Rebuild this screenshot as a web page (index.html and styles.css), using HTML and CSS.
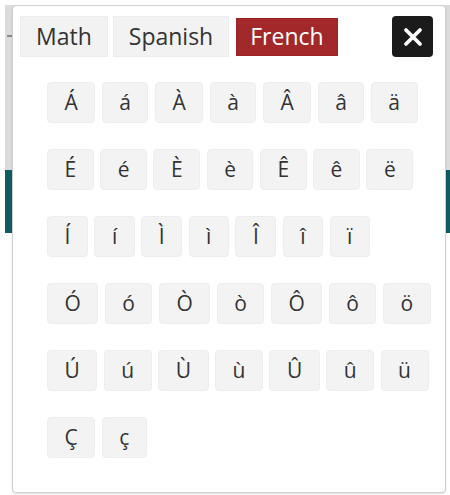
FILE: index.html
```html
<!DOCTYPE html>
<html>
<head>
<meta charset="utf-8">
<link rel="stylesheet" href="styles.css">
</head>
<body>
<div class="page">
  <div class="band-gray"><span class="tick"></span></div>
  <div class="band-teal"></div>
</div>
<div class="popup">
  <div class="header">
    <div class="tabs">
      <button class="tab">Math</button>
      <button class="tab">Spanish</button>
      <button class="tab active">French</button>
    </div>
    <button class="close" aria-label="Close">
      <svg width="20" height="20" viewBox="0 0 20 20"><path d="M3 3 L17 17 M17 3 L3 17" stroke="#fff" stroke-width="3.8" stroke-linecap="round"/></svg>
    </button>
  </div>
  <div class="chars">
    <div class="row"><button class="ch">Á</button><button class="ch">á</button><button class="ch">À</button><button class="ch">à</button><button class="ch">Â</button><button class="ch">â</button><button class="ch">ä</button></div>
    <div class="row"><button class="ch">É</button><button class="ch">é</button><button class="ch">È</button><button class="ch">è</button><button class="ch">Ê</button><button class="ch">ê</button><button class="ch">ë</button></div>
    <div class="row"><button class="ch">Í</button><button class="ch">í</button><button class="ch">Ì</button><button class="ch">ì</button><button class="ch">Î</button><button class="ch">î</button><button class="ch">ï</button></div>
    <div class="row"><button class="ch">Ó</button><button class="ch">ó</button><button class="ch">Ò</button><button class="ch">ò</button><button class="ch">Ô</button><button class="ch">ô</button><button class="ch">ö</button></div>
    <div class="row"><button class="ch">Ú</button><button class="ch">ú</button><button class="ch">Ù</button><button class="ch">ù</button><button class="ch">Û</button><button class="ch">û</button><button class="ch">ü</button></div>
    <div class="row"><button class="ch">Ç</button><button class="ch">ç</button></div>
  </div>
</div>
</body>
</html>
```
FILE: styles.css
```css
html, body {
  margin: 0;
  padding: 0;
  background: #fff;
  width: 450px;
  height: 495px;
  overflow: hidden;
  font-family: "Open Sans", "Liberation Sans", sans-serif;
}

.page {
  padding: 5px 0 0 5px;
}

.band-gray {
  height: 165px;
  background: #dcdcdc;
  position: relative;
}

.tick {
  position: absolute;
  left: 2px;
  top: 30px;
  width: 5px;
  height: 2px;
  background: #888;
}

.band-teal {
  height: 63px;
  background: #0e5c60;
}

.popup {
  position: absolute;
  left: 12px;
  top: 5px;
  width: 432px;
  height: 486px;
  background: #fff;
  border: 1px solid #cfcfcf;
  border-radius: 4px;
  box-shadow: 0 1px 2px rgba(0, 0, 0, 0.12);
}

.header {
  display: flex;
  justify-content: space-between;
  align-items: flex-start;
  padding: 10px 12px 0 7px;
}

.tabs {
  display: flex;
  align-items: center;
  gap: 5px;
}

.tab {
  font-family: inherit;
  font-size: 23px;
  color: #333;
  background: #f2f2f2;
  border: 1px solid #ececec;
  height: 41px;
  padding: 0 15px;
  margin: 0;
  line-height: 1;
}

.tab.active {
  background: #a2282a;
  border-color: #9a2326;
  color: #fff;
  height: 38px;
  padding: 0 13px;
  margin-left: 2px;
}

.close {
  width: 41px;
  height: 41px;
  margin: 0;
  padding: 0;
  border: none;
  border-radius: 4px;
  background: #1b1b1b;
  display: flex;
  align-items: center;
  justify-content: center;
}

.chars {
  display: flex;
  flex-direction: column;
  gap: 26px;
  padding: 25px 0 0 34px;
}

.row {
  display: flex;
  gap: 6.5px;
}

.ch {
  font-family: inherit;
  font-size: 21px;
  color: #333;
  background: #f3f3f3;
  border: 1px solid #ededed;
  border-radius: 4px;
  height: 41px;
  padding: 0 16.5px;
  margin: 0;
  line-height: 1;
}
```
